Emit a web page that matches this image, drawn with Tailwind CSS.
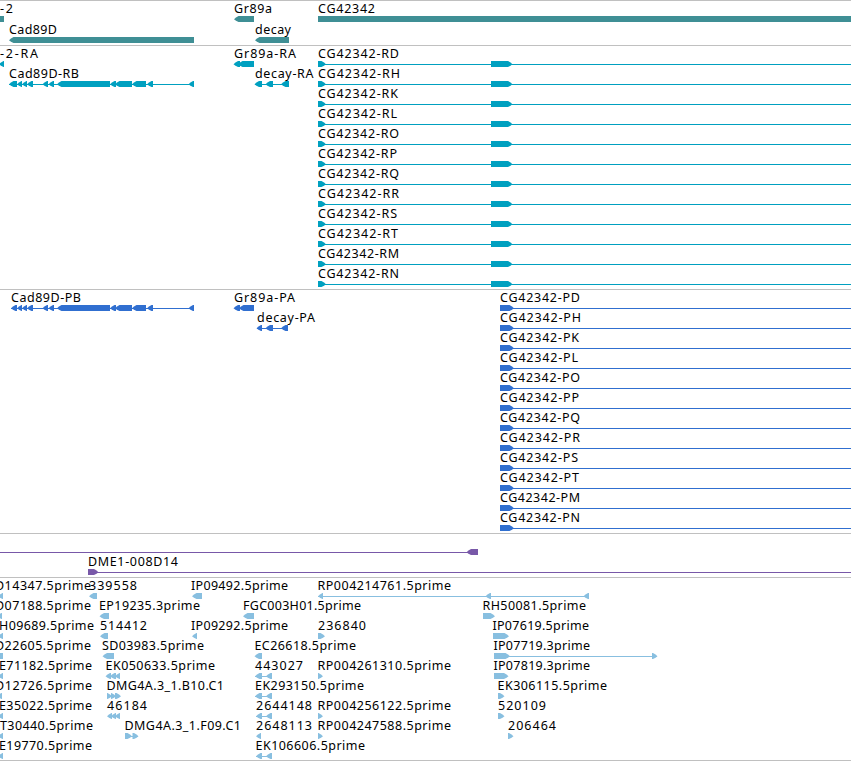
<!DOCTYPE html>
<html lang="en">
<head>
    <meta charset="UTF-8">
    <meta name="viewport" content="width=device-width, initial-scale=1.0">
    <title>Genome Browser</title>
    <script src="https://cdn.jsdelivr.net/npm/@tailwindcss/browser@4"></script>
</head>
<body class="bg-white overflow-hidden">
    <main class="flex flex-col w-[851px] font-['Noto_Sans','DejaVu_Sans',sans-serif] text-[12.5px] border-b border-[#c0c0c0]">
        <section class="h-[45px] border-t border-[#c0c0c0]"><svg id="genes" class="block w-full h-full text-[#3f8f95]"></svg></section>
        <section class="h-[244px] border-t border-[#c0c0c0]"><svg id="transcripts" class="block w-full h-full text-[#00a0c0]"></svg></section>
        <section class="h-[244px] border-t border-[#c0c0c0]"><svg id="proteins" class="block w-full h-full text-[#306fd0]"></svg></section>
        <section class="h-[44px] border-t border-[#c0c0c0]"><svg id="clones" class="block w-full h-full text-[#7858a8]"></svg></section>
        <section class="h-[183px] border-t border-[#c0c0c0]"><svg id="ests" class="block w-full h-full text-[#88bfe0]"></svg></section>
    </main>

    <script>
        // feature: [row, label, label start, label end, direction, blocks, line]
        // direction: '<' reverse strand, '>' forward strand, '=' no arrow
        const genes = [
            [0, '-2', 0, 13, '=', [[0, 4]]],
            [1, 'Cad89D', 9, 57, '<', [[9, 194]]],
            [0, 'Gr89a', 234, 272, '<', [[234, 254]]],
            [1, 'decay', 255, 291, '<', [[255, 289]]],
            [0, 'CG42342', 318, 375, '=', [[318, 851]]]
        ];

        const exons = [[17, 22], [22, 27], [27, 33], [42.5, 48], [48.5, 54], [57, 110], [110, 116], [115, 132], [132, 146], [147, 153], [188.5, 194]];

        const transcripts = [
            [0, '-2-RA', 0, 38, '<', [[-1, 4]]],
            [1, 'Cad89D-RB', 9, 79, '<', [[9, 17], ...exons], [9, 194]],
            [0, 'Gr89a-RA', 234, 296, '<', [[233.5, 240], [238, 254]]],
            [1, 'decay-RA', 255, 313.5, '<', [[254.5, 262], [265.5, 273], [281, 289]], [255, 289]]
        ];
        ['D', 'H', 'K', 'L', 'O', 'P', 'Q', 'R', 'S', 'T', 'M', 'N'].forEach((s, i) => {
            transcripts.push([i, 'CG42342-R' + s, 318, { D: 399, H: 400, K: 398, L: 397, T: 398, S: 397, P: 397 }[s] || 399, '>', [[318, 326], [491, 512.5]], [318, 851]]);
        });

        const proteins = [
            [0, 'Cad89D-PB', 11, 81, '<', [[11, 17], ...exons], [11, 194]],
            [0, 'Gr89a-PA', 234, 295, '<', [[233.5, 240], [239, 254]]],
            [1, 'decay-PA', 257, 315, '<', [[256.5, 262], [265.5, 273], [281, 288]], [257, 288]]
        ];
        ['D', 'H', 'K', 'L', 'O', 'P', 'Q', 'R', 'S', 'T', 'M', 'N'].forEach((s, i) => {
            proteins.push([i, 'CG42342-P' + s, 500, { D: 580, H: 581, K: 579, L: 578, T: 579, S: 578, P: 579 }[s] || 580, '>', [[500, 514]], [500, 851]]);
        });

        const clones = [
            [0, '', 0, 0, '<', [[466.5, 478]], [0, 478]],
            [1, 'DME1-008D14', 88, 178, '>', [[88, 98.5]], [88, 851]]
        ];

        const ests = [
            [0, 'D14347.5prime', -5, 91, '<', [[-2, 3]]],
            [1, 'D07188.5prime', -5, 91, '<', [[-3, 2]]],
            [2, 'H09689.5prime', -1, 94, '<', [[-2, 3]]],
            [3, 'D22605.5prime', -5, 91, '=', [[0, 3]]],
            [4, 'E71182.5prime', -1, 92, '<', [[-2, 3]]],
            [5, 'D12726.5prime', -5, 92, '<', [[-3, 2]]],
            [6, 'E35022.5prime', -1, 92, '<', [[-2, 3]]],
            [7, 'T30440.5prime', 0, 93, '<', [[-2, 3]]],
            [8, 'E19770.5prime', -1, 92, '<', [[-2, 3]]],
            [0, '339558', 89, 137, '<', [[89, 97]]],
            [1, 'EP19235.3prime', 99, 200, '<', [[99.5, 109]]],
            [2, '514412', 100, 147, '<', [[100, 108]]],
            [3, 'SD03983.5prime', 102, 204, '<', [[102.5, 114]]],
            [4, 'EK050633.5prime', 105.5, 215, '<', [[105.5, 111], [110, 116], [115, 120]]],
            [5, 'DMG4A.3_1.B10.C1', 106.5, 224, '>', [[107, 112], [111, 116], [115, 121]]],
            [6, '46184', 107, 147, '<', [[107, 112], [111, 116], [115, 120]]],
            [7, 'DMG4A.3_1.F09.C1', 124.5, 241, '>', [[125, 132], [132.5, 138.5]], [125, 138]],
            [0, 'IP09492.5prime', 191, 288, '<', [[192, 202]]],
            [1, 'FGC003H01.5prime', 243, 361, '<', [[243, 254]]],
            [2, 'IP09292.5prime', 191, 288, '<', [[192, 197]]],
            [3, 'EC26618.5prime', 254.5, 356, '<', [[254.5, 262]]],
            [4, '443027', 255, 303, '<', [[255, 262], [266, 272]], [255, 272]],
            [5, 'EK293150.5prime', 255, 364, '<', [[255, 262], [266, 272]], [255, 272]],
            [6, '2644148', 256, 312, '<', [[256, 262], [266, 272]], [256, 272]],
            [7, '2648113', 256, 312, '<', [[256, 261]]],
            [8, 'EK106606.5prime', 255.5, 365, '<', [[256, 262], [266, 272]], [256, 272]],
            [0, 'RP004214761.5prime', 317.5, 451, '<', [[318, 323], [485.5, 491], [583.5, 589]], [318, 589]],
            [2, '236840', 318, 366, '>', [[318, 325]]],
            [4, 'RP004261310.5prime', 317.5, 451, '>', [[318, 323]]],
            [6, 'RP004256122.5prime', 317.5, 451, '>', [[318, 323]]],
            [7, 'RP004247588.5prime', 317.5, 451, '>', [[318, 323]]],
            [1, 'RH50081.5prime', 482.5, 586, '>', [[483, 495]]],
            [2, 'IP07619.5prime', 492.5, 589, '>', [[493, 509]]],
            [3, 'IP07719.3prime', 493.5, 590, '>', [[494, 510], [652, 657.5]], [494, 657]],
            [4, 'IP07819.3prime', 493.5, 590, '>', [[494, 508.5]]],
            [5, 'EK306115.5prime', 497.5, 607, '>', [[498, 504.5]]],
            [6, '520109', 498, 546, '>', [[498, 504.5]]],
            [7, '206464', 508, 556, '>', [[508, 513.5]]]
        ];

        // block with a slightly rounded arrow head on the strand side
        function shape(dir, [a, b], y) {
            const head = Math.min(5, b - a);
            if (dir === '=') return `<rect fill="currentColor" x="${a}" y="${y}" width="${b - a}" height="6"/>`;
            const [tip, back, s] = dir === '<' ? [a, b, 1] : [b, a, -1];
            return `<path fill="currentColor" d="M${tip} ${y + 3.2}L${tip + s * head * 0.4} ${y + 1.4}L${tip + s * head * 0.9} ${y}H${back}V${y + 6}H${tip + s * head * 0.9}L${tip + s * head * 0.4} ${y + 4.8}Z"/>`;
        }

        function drawTrack(id, features, pitch) {
            let out = '';
            for (const [row, label, x1, x2, dir, blocks, line] of features) {
                const y = 15 + row * pitch;
                if (label) out += `<text x="${x1}" y="${y - 3}" textLength="${x2 - x1}" fill="#000">${label}</text>`;
                if (line) out += `<rect fill="currentColor" x="${line[0]}" y="${y + 3}" width="${line[1] - line[0]}" height="1"/>`;
                for (const block of blocks) out += shape(dir, block, y);
            }
            document.getElementById(id).innerHTML = out;
        }

        drawTrack('genes', genes, 21);
        drawTrack('transcripts', transcripts, 20);
        drawTrack('proteins', proteins, 20);
        drawTrack('clones', clones, 20);
        drawTrack('ests', ests, 20);
    </script>
</body>
</html>
